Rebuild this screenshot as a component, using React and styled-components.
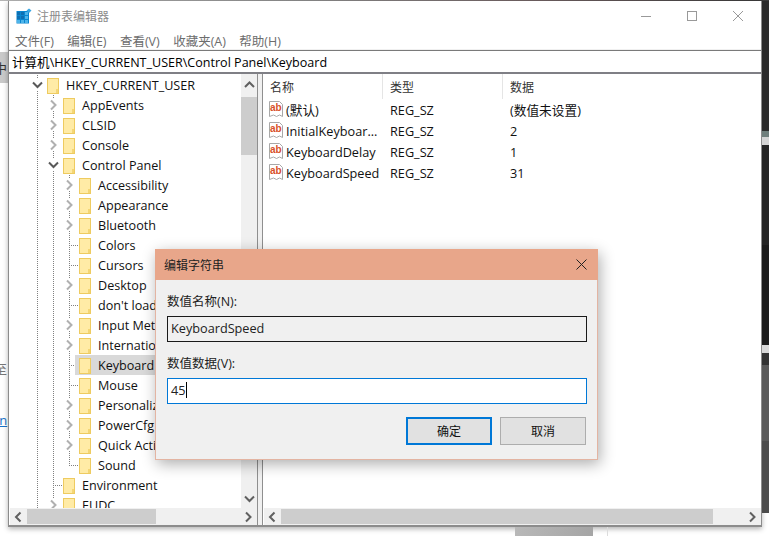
import React from "react";
import styled, { createGlobalStyle } from "styled-components";

const FONT = '"Open Sans", "Noto Sans CJK SC", sans-serif';

const GlobalStyle = createGlobalStyle`
  html, body {
    margin: 0;
    padding: 0;
    background: #fff;
  }
  body {
    font-family: ${FONT};
    font-size: 12px;
    color: #000;
  }
`;

const Page = styled.div`
  position: relative;
  width: 769px;
  height: 536px;
  overflow: hidden;
  display: grid;
  grid-template-columns: 8px 754px 7px;
  grid-template-rows: 1px 526px 9px;
  background: #fff;
`;

const TopEdge = styled.div`
  grid-column: 1 / 4;
  background: linear-gradient(to right, #b5b5b5 0, #8a8a8a 40%, #6e5f60 70%, #3a3a3a 100%);
`;

const LeftStrip = styled.div`
  grid-row: 2 / 4;
  grid-column: 1;
  overflow: hidden;
  display: flex;
  flex-direction: column;
  padding-top: 51px;
`;

const LeftGrey = styled.div`
  height: 31px;
  background: #c9c9c9;
  display: flex;
  align-items: center;
  margin-left: -6px;
  width: 14px;
  font-size: 13px;
  color: #333;
`;

const LeftGlyph = styled.div`
  margin: 277px 0 0 -6px;
  font-size: 13px;
  line-height: 18px;
  color: #777;
  white-space: nowrap;
`;

const LeftLink = styled.div`
  margin: 34px 0 0 -6px;
  font-size: 13px;
  line-height: 16px;
  color: #1a73c8;
  text-decoration: underline;
`;

const RightStrip = styled.div`
  grid-row: 2 / 4;
  grid-column: 3;
  overflow: hidden;
  display: flex;
  flex-direction: column;
`;

const Band = styled.div`
  height: ${(p) => p.$h}px;
  background: ${(p) => p.$c};
`;

const BottomStrip = styled.div`
  grid-row: 3;
  grid-column: 2;
  display: flex;
  padding-left: 507px;
  gap: 14px;
`;

const BottomBlock = styled.div`
  width: 78px;
  background: linear-gradient(to right, #b8b8b8, #a5a5a5);
`;

const BottomLine = styled.div`
  width: 1px;
  background: #dcdcdc;
`;

const Win = styled.div`
  grid-row: 2;
  grid-column: 2;
  display: flex;
  flex-direction: column;
  background: #fff;
  border: 1px solid #8c8c8c;
  border-top: none;
  border-bottom-width: 2px;
  box-shadow: 0 2px 5px rgba(0, 0, 0, 0.3);
  min-height: 0;
`;

const TitleBar = styled.div`
  height: 29px;
  flex: none;
  display: flex;
  align-items: center;
  padding-left: 7px;
  background: #fff;
`;

const TitleText = styled.div`
  margin-left: 5px;
  font-size: 12px;
  color: #8c8c8c;
`;

const WinButtons = styled.div`
  margin-left: auto;
  display: flex;
  height: 29px;
`;

const WinButton = styled.div`
  width: 46px;
  display: flex;
  align-items: center;
  justify-content: center;
`;

const MenuBar = styled.div`
  height: 20px;
  flex: none;
  display: flex;
  align-items: center;
  padding: 1px 0 0 6px;
  box-sizing: border-box;
  gap: 13.4px;
  font-size: 12.5px;
  color: #6d6d6d;
  border-bottom: 1px solid #f0f0f0;
`;

const AddressBar = styled.div`
  height: 21px;
  flex: none;
  display: flex;
  align-items: center;
  padding-left: 3px;
  font-size: 12.55px;
  color: #000;
  white-space: nowrap;
  border-top: 1px solid #7a7a7a;
  border-bottom: 2px solid #7f7f85;
`;

const Panes = styled.div`
  flex: 1;
  min-height: 0;
  display: flex;
`;

const TreePane = styled.div`
  width: 248px;
  flex: none;
  display: flex;
  flex-direction: column;
  min-height: 0;
`;

const PaneTop = styled.div`
  flex: 1;
  min-height: 0;
  display: flex;
`;

const TreeBody = styled.div`
  flex: 1;
  min-width: 0;
  overflow: hidden;
  padding-top: 1px;
`;

const Row = styled.div`
  height: 20px;
  display: flex;
  padding-left: 21px;
  font-size: 12.6px;
  white-space: nowrap;
`;

const dots = "repeating-linear-gradient(to bottom, #808080 0 1px, transparent 1px 2px)";
const hdots = "repeating-linear-gradient(to right, #808080 0 1px, transparent 1px 2px)";

const Cell = styled.div`
  width: 16px;
  flex: none;
  display: flex;
  align-items: center;
  padding-left: 2px;
  box-sizing: border-box;
  background-image: ${(p) => (p.$line ? dots : "none")}, ${(p) => (p.$branch ? hdots : "none")};
  background-repeat: no-repeat;
  background-size: 1px ${(p) => (p.$last ? "50%" : "100%")}, 9px 1px;
  background-position: 7px 0, 7px 10px;
`;

const ChevronBox = styled.svg`
  width: 11px;
  height: 12px;
  background: ${(p) => p.$bg};
  display: block;
`;

const FolderIcon = styled.svg`
  width: 12px;
  height: 16px;
  flex: none;
  margin-top: 2px;
`;

const Node = styled.div`
  display: flex;
  align-items: center;
  margin-left: -3px;
  padding: 0 2px 0 4px;
  background: ${(p) => (p.$selected ? "#d9d9d9" : "transparent")};
`;

const Label = styled.span`
  margin-left: 7px;
  color: #111;
`;

const ScrollV = styled.div`
  width: 16px;
  flex: none;
  background: #f0f0f0;
  display: flex;
  flex-direction: column;
  align-items: center;
  padding-top: 5px;
  box-sizing: border-box;
`;

const ThumbV = styled.div`
  width: 16px;
  height: 58px;
  margin-top: 6px;
  background: #cdcdcd;
`;

const ScrollVEnd = styled.div`
  margin-top: auto;
  padding-bottom: 3px;
`;

const ScrollH = styled.div`
  height: 17px;
  flex: none;
  margin-left: 1px;
  display: flex;
  align-items: center;
  background: #f0f0f0;
  box-sizing: border-box;
`;

const ArrowSlot = styled.div`
  width: 17px;
  flex: none;
  display: flex;
  justify-content: center;
`;

const ThumbH = styled.div`
  height: 15px;
  width: ${(p) => p.$w}px;
  background: #cdcdcd;
`;

const ScrollSpacer = styled.div`
  flex: 1;
`;

const Splitter = styled.div`
  width: 6px;
  flex: none;
  box-sizing: border-box;
  background: #f0f0f0;
  border-left: 1px solid #8f8f8f;
  border-right: 1px solid #8f8f8f;
`;

const ListPane = styled.div`
  flex: 1;
  min-width: 0;
  display: flex;
  flex-direction: column;
`;

const ListBody = styled.div`
  flex: 1;
  min-height: 0;
`;

const Columns = styled.div`
  display: grid;
  grid-template-columns: 120px 120px 1fr;
  align-items: center;
  font-size: 12.7px;
  white-space: nowrap;
`;

const HeaderRow = styled(Columns)`
  height: 25px;
  font-size: 12px;
  color: #333;
`;

const HeaderCell = styled.div`
  height: 100%;
  display: flex;
  align-items: center;
  padding-left: 7px;
  border-right: ${(p) => (p.$last ? "none" : "1px solid #e5e5e5")};
  box-sizing: border-box;
`;

const DataRow = styled(Columns)`
  height: 21px;
  color: #111;
`;

const NameCell = styled.div`
  display: flex;
  align-items: center;
  padding-left: 5px;
  overflow: hidden;
`;

const NameText = styled.span`
  margin-left: 2px;
`;

const TextCell = styled.div`
  padding-left: 7px;
`;

const Dialog = styled.div`
  position: absolute;
  left: 155px;
  top: 249px;
  width: 443px;
  height: 211px;
  box-sizing: border-box;
  display: flex;
  flex-direction: column;
  background: #f0f0f0;
  border: 1px solid #e3b4a2;
  border-top: none;
  box-shadow: 2px 4px 14px rgba(0, 0, 0, 0.32);
`;

const DialogTitle = styled.div`
  height: 31px;
  flex: none;
  margin: 0 -1px;
  display: flex;
  align-items: center;
  justify-content: space-between;
  padding: 0 11px 0 9px;
  background: #e8a68a;
  font-size: 12px;
  color: #222;
`;

const DialogBody = styled.div`
  flex: 1;
  display: flex;
  flex-direction: column;
  padding: 13px 10px 0 11px;
`;

const FieldLabel = styled.div`
  font-size: 12.5px;
  line-height: 18px;
  color: #222;
`;

const Field = styled.div`
  height: 26px;
  box-sizing: border-box;
  margin: ${(p) => p.$top}px 0 ${(p) => p.$gap}px;
  padding: 0 0 3px 3px;
  display: flex;
  align-items: center;
  font-size: 12.7px;
  color: #222;
  background: ${(p) => (p.$active ? "#fff" : "#f0f0f0")};
  border: 1px solid ${(p) => (p.$active ? "#0078d7" : "#1a1a1a")};
`;

const Caret = styled.span`
  width: 1px;
  height: 16px;
  margin: 1px 0 0 0;
  background: #000;
`;

const Actions = styled.div`
  display: flex;
  justify-content: flex-end;
  gap: 8px;
  padding-right: 1px;
`;

const DialogButton = styled.div`
  width: 86px;
  height: 28px;
  box-sizing: border-box;
  display: flex;
  align-items: center;
  justify-content: center;
  font-size: 12px;
  color: #111;
  background: #e1e1e1;
  border: ${(p) => (p.$primary ? "2px solid #0078d7" : "1px solid #adadad")};
`;

const tree = [
  { name: "HKEY_CURRENT_USER", depth: 0, kind: "open" },
  { name: "AppEvents", depth: 1, kind: "closed" },
  { name: "CLSID", depth: 1, kind: "closed" },
  { name: "Console", depth: 1, kind: "closed" },
  { name: "Control Panel", depth: 1, kind: "open" },
  { name: "Accessibility", depth: 2, kind: "closed" },
  { name: "Appearance", depth: 2, kind: "closed" },
  { name: "Bluetooth", depth: 2, kind: "closed" },
  { name: "Colors", depth: 2, kind: "leaf" },
  { name: "Cursors", depth: 2, kind: "leaf" },
  { name: "Desktop", depth: 2, kind: "closed" },
  { name: "don't load", depth: 2, kind: "leaf" },
  { name: "Input Method", depth: 2, kind: "closed" },
  { name: "International", depth: 2, kind: "closed" },
  { name: "Keyboard", depth: 2, kind: "leaf", selected: true },
  { name: "Mouse", depth: 2, kind: "leaf" },
  { name: "Personalization", depth: 2, kind: "closed" },
  { name: "PowerCfg", depth: 2, kind: "closed" },
  { name: "Quick Actions", depth: 2, kind: "closed" },
  { name: "Sound", depth: 2, kind: "last" },
  { name: "Environment", depth: 1, kind: "leaf" },
  { name: "EUDC", depth: 1, kind: "closed" },
];

const values = [
  { name: "(默认)", data: "(数值未设置)" },
  { name: "InitialKeyboar...", data: "2" },
  { name: "KeyboardDelay", data: "1" },
  { name: "KeyboardSpeed", data: "31" },
];

const rightBands = [
  [130, "#2b2b2b"],
  [6, "#6f7f7c"],
  [8, "#d4d4d4"],
  [100, "#242424"],
  [100, "#1b1b1b"],
  [8, "#d8d8d8"],
  [12, "#333333"],
  [76, "#5a5a5a"],
  [72, "#4c4c4c"],
];

function AppIcon() {
  return (
    <svg width="16" height="16" viewBox="0 0 16 16">
      <rect x="0.5" y="3" width="12.5" height="12.5" fill="#0a86d0" />
      {[4, 8, 12].map((y) =>
        [1, 5, 9].map((x) => (
          <rect key={`${x}-${y}`} x={x} y={y} width="3" height="3" fill={y === 12 || x === 9 ? "#4cb4ea" : "#0f6fb2"} />
        ))
      )}
      <path d="M13 0.5l2.5 2-2.5 2.5-2.5-2.5z" fill="#3aa6e2" />
    </svg>
  );
}

function Folder() {
  return (
    <FolderIcon viewBox="0 0 12 16">
      <rect x="0.5" y="0.5" width="11" height="15" fill="#ffeba6" stroke="#eecb60" />
      <rect x="9" y="11" width="2" height="4" fill="#f4d675" />
    </FolderIcon>
  );
}

function Chevron({ dir, color, bg = "#fff" }) {
  const paths = {
    right: "M3 1.5l4.5 4.5-4.5 4.5",
    left: "M7.5 1.5l-4.5 4.5 4.5 4.5",
    down: "M1 3.5l4.5 4.5 4.5-4.5",
    up: "M1 8l4.5-4.5 4.5 4.5",
  };
  return (
    <ChevronBox viewBox="0 0 11 12" $bg={bg}>
      <path d={paths[dir]} fill="none" stroke={color} strokeWidth="2" />
    </ChevronBox>
  );
}

function TreeRow({ item }) {
  const cells = [];
  for (let i = 0; i < item.depth; i++) cells.push(<Cell key={i} $line />);
  return (
    <Row>
      {cells}
      <Cell $line $branch={item.kind === "leaf" || item.kind === "last"} $last={item.kind === "last"}>
        {item.kind === "open" && <Chevron dir="down" color="#595959" />}
        {item.kind === "closed" && <Chevron dir="right" color="#b0b0b0" />}
      </Cell>
      <Node $selected={item.selected}>
        <Folder />
        <Label>{item.name}</Label>
      </Node>
    </Row>
  );
}

function StringIcon() {
  return (
    <svg width="16" height="17" viewBox="0 0 16 17" style={{ flex: "none" }}>
      <path d="M1.5 0.5h10l3 3v12l-3-1.5-3 1.5-3-1.5-4 1.5z" fill="#fff" stroke="#a8a8a8" />
      <text x="2" y="10" fontSize="10" fontWeight="700" fontFamily="Liberation Sans, sans-serif" fill="#d8502a">
        ab
      </text>
    </svg>
  );
}

function ScrollBarH({ thumb }) {
  return (
    <ScrollH>
      <ArrowSlot>
        <Chevron dir="left" color="#606060" bg="#f0f0f0" />
      </ArrowSlot>
      <ThumbH $w={thumb} />
      <ScrollSpacer />
      <ArrowSlot>
        <Chevron dir="right" color="#606060" bg="#f0f0f0" />
      </ArrowSlot>
    </ScrollH>
  );
}

export default function App() {
  return (
    <Page>
      <GlobalStyle />
      <TopEdge />
      <LeftStrip>
        <LeftGrey>中</LeftGrey>
        <LeftGlyph>至</LeftGlyph>
        <LeftLink>rn</LeftLink>
      </LeftStrip>
      <Win>
        <TitleBar>
          <AppIcon />
          <TitleText>注册表编辑器</TitleText>
          <WinButtons>
            <WinButton>
              <svg width="10" height="10" viewBox="0 0 10 10">
                <path d="M0 5.5h10" stroke="#999" />
              </svg>
            </WinButton>
            <WinButton>
              <svg width="10" height="10" viewBox="0 0 10 10">
                <rect x="0.5" y="0.5" width="9" height="9" fill="none" stroke="#999" />
              </svg>
            </WinButton>
            <WinButton>
              <svg width="10" height="10" viewBox="0 0 10 10">
                <path d="M0 0l10 10M10 0L0 10" stroke="#999" />
              </svg>
            </WinButton>
          </WinButtons>
        </TitleBar>
        <MenuBar>
          <span>文件(F)</span>
          <span>编辑(E)</span>
          <span>查看(V)</span>
          <span>收藏夹(A)</span>
          <span>帮助(H)</span>
        </MenuBar>
        <AddressBar>计算机\HKEY_CURRENT_USER\Control Panel\Keyboard</AddressBar>
        <Panes>
          <TreePane>
            <PaneTop>
              <TreeBody>
                {tree.map((item) => (
                  <TreeRow key={item.name} item={item} />
                ))}
              </TreeBody>
              <ScrollV>
                <Chevron dir="up" color="#606060" bg="#f0f0f0" />
                <ThumbV />
                <ScrollVEnd>
                  <Chevron dir="down" color="#606060" bg="#f0f0f0" />
                </ScrollVEnd>
              </ScrollV>
            </PaneTop>
            <ScrollBarH thumb={129} />
          </TreePane>
          <Splitter />
          <ListPane>
            <ListBody>
              <HeaderRow>
                <HeaderCell>名称</HeaderCell>
                <HeaderCell>类型</HeaderCell>
                <HeaderCell $last>数据</HeaderCell>
              </HeaderRow>
              {values.map((v) => (
                <DataRow key={v.name}>
                  <NameCell>
                    <StringIcon />
                    <NameText>{v.name}</NameText>
                  </NameCell>
                  <TextCell>REG_SZ</TextCell>
                  <TextCell>{v.data}</TextCell>
                </DataRow>
              ))}
            </ListBody>
            <ScrollBarH thumb={432} />
          </ListPane>
        </Panes>
      </Win>
      <RightStrip>
        {rightBands.map(([h, c], i) => (
          <Band key={i} $h={h} $c={c} />
        ))}
      </RightStrip>
      <BottomStrip>
        <BottomBlock />
        <BottomLine />
      </BottomStrip>
      <Dialog>
        <DialogTitle>
          <span>编辑字符串</span>
          <svg width="11" height="11" viewBox="0 0 11 11">
            <path d="M0.5 0.5l10 10M10.5 0.5l-10 10" stroke="#222" />
          </svg>
        </DialogTitle>
        <DialogBody>
          <FieldLabel>数值名称(N):</FieldLabel>
          <Field $top={5} $gap={13}>KeyboardSpeed</Field>
          <FieldLabel>数值数据(V):</FieldLabel>
          <Field $active $top={5} $gap={13}>
            45
            <Caret />
          </Field>
          <Actions>
            <DialogButton $primary>确定</DialogButton>
            <DialogButton>取消</DialogButton>
          </Actions>
        </DialogBody>
      </Dialog>
    </Page>
  );
}
